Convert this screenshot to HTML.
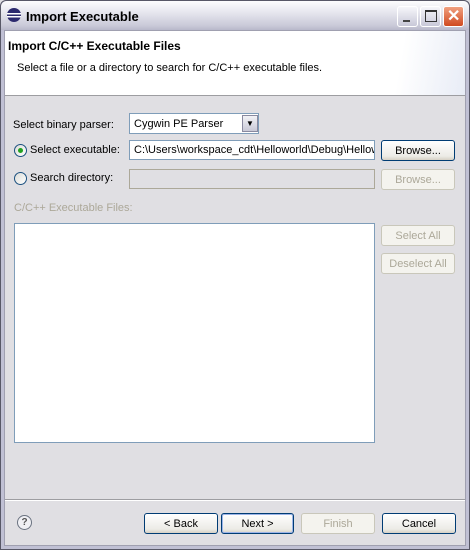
<!DOCTYPE html>
<html><head><style>
*{box-sizing:border-box;margin:0;padding:0}
body{width:470px;height:550px;overflow:hidden;font-family:"Liberation Sans",sans-serif;font-size:11px;color:#000;position:relative;background:#e0dfe3}
.frame{position:absolute;left:0;top:0;width:470px;height:550px;border:1px solid #585867;border-radius:6px 6px 0 0;background:#c0c0d4}
.title{position:absolute;left:1px;top:1px;width:468px;height:29px;border-radius:6px 6px 0 0;background:linear-gradient(#fdfdfe,#e6e6ee 40%,#c9c9d8 85%,#b8b8ca)}
.client{position:absolute;left:4px;top:30px;width:462px;height:516px;background:#e0dfe3;border:1px solid #a0a0b0}
.ab{position:absolute;white-space:nowrap}
.banner{position:absolute;left:5px;top:31px;width:460px;height:65px;background:linear-gradient(100deg,#fff 85%,#e8ecf6);border-bottom:1px solid #9d9da1}
.btn{position:absolute;height:21px;border:1px solid #003c74;border-radius:3px;background:linear-gradient(#fff,#ecebe6 80%,#d6d0c5);text-align:center;line-height:20px}
.dis{border-color:#c9c7ba;background:#f4f3ee;color:#aca899}
.tb{position:absolute;height:20px;border:1px solid #7f9db9;background:#fff;padding-left:4px;line-height:19px;white-space:nowrap;overflow:hidden}
.radio{position:absolute;width:13px;height:13px;border-radius:50%;border:1px solid #1c5180;background:linear-gradient(135deg,#dcdcd7,#fff)}
.wb{position:absolute;top:6px;width:21px;height:21px;border:1px solid #fff;border-radius:3px;background:linear-gradient(#f6f6fa,#c8c8d8)}
</style></head><body>
<div class="frame"></div>
<div class="title"></div>
<svg class="ab" style="left:6px;top:7px" width="16" height="16"><circle cx="8" cy="8" r="7" fill="#2c2a6e"/><rect x="1" y="6" width="14" height="1.5" fill="#fff"/><rect x="1" y="9" width="14" height="1.5" fill="#fff"/></svg>
<div class="ab" style="left:26px;top:9px;font-size:13px;font-weight:bold;color:#000">Import Executable</div>
<div class="wb" style="left:397px"><div class="ab" style="left:5px;top:13px;width:7px;height:2px;background:#444"></div></div>
<div class="wb" style="left:420px"><div class="ab" style="left:4px;top:3px;width:12px;height:12px;border:1px solid #333;border-top-width:2px"></div></div>
<div class="wb" style="left:443px;background:linear-gradient(#f0a080,#d04a20);"><div class="ab" style="left:3px;top:-1px;color:#fff;font-size:16px;font-weight:bold">✕</div></div>
<div class="client"></div>
<div class="banner"></div>
<div class="ab" style="left:8px;top:39px;font-weight:bold;font-size:12px">Import C/C++ Executable Files</div>
<div class="ab" style="left:17px;top:62px">Select a file or a directory to search for C/C++ executable files.</div>

<div class="ab" style="left:13px;top:119px">Select binary parser:</div>
<div class="tb" style="left:129px;top:113px;width:130px;height:21px;line-height:20px">Cygwin PE Parser</div>
<div class="ab" style="left:242px;top:115px;width:16px;height:17px;border:1px solid #8a8aa0;background:linear-gradient(#f2f2f6,#c8c8d6);text-align:center;font-size:8px;line-height:15px">▼</div>

<div class="radio" style="left:14px;top:144px"><div class="ab" style="left:3px;top:3px;width:5px;height:5px;border-radius:50%;background:#21a121"></div></div>
<div class="ab" style="left:30px;top:144px">Select executable:</div>
<div class="tb" style="left:129px;top:140px;width:246px">C:\Users\workspace_cdt\Helloworld\Debug\Hellow</div>
<div class="btn" style="left:381px;top:140px;width:74px">Browse...</div>

<div class="radio" style="left:14px;top:172px"></div>
<div class="ab" style="left:30px;top:172px">Search directory:</div>
<div class="tb" style="left:129px;top:169px;width:246px;background:#e0dfe3;border-color:#aca899"></div>
<div class="btn dis" style="left:381px;top:169px;width:74px">Browse...</div>

<div class="ab" style="left:14px;top:202px;color:#aca899">C/C++ Executable Files:</div>
<div class="tb" style="left:14px;top:223px;width:361px;height:220px"></div>
<div class="btn dis" style="left:381px;top:225px;width:74px">Select All</div>
<div class="btn dis" style="left:381px;top:253px;width:74px">Deselect All</div>

<div class="ab" style="left:5px;top:499px;width:460px;height:2px;border-top:1px solid #9d9da1;border-bottom:1px solid #fff"></div>
<div class="ab" style="left:17px;top:515px;width:15px;height:15px;border-radius:50%;border:1px solid #6a7280;background:#f0f0f4;text-align:center;font-weight:bold;font-size:10px;line-height:13px;color:#555">?</div>
<div class="btn" style="left:144px;top:513px;width:74px">&lt; Back</div>
<div class="btn" style="left:221px;top:513px;width:73px;box-shadow:inset 0 0 0 1px #9cb4e8">Next &gt;</div>
<div class="btn dis" style="left:301px;top:513px;width:74px">Finish</div>
<div class="btn" style="left:382px;top:513px;width:74px">Cancel</div>
</body></html>
